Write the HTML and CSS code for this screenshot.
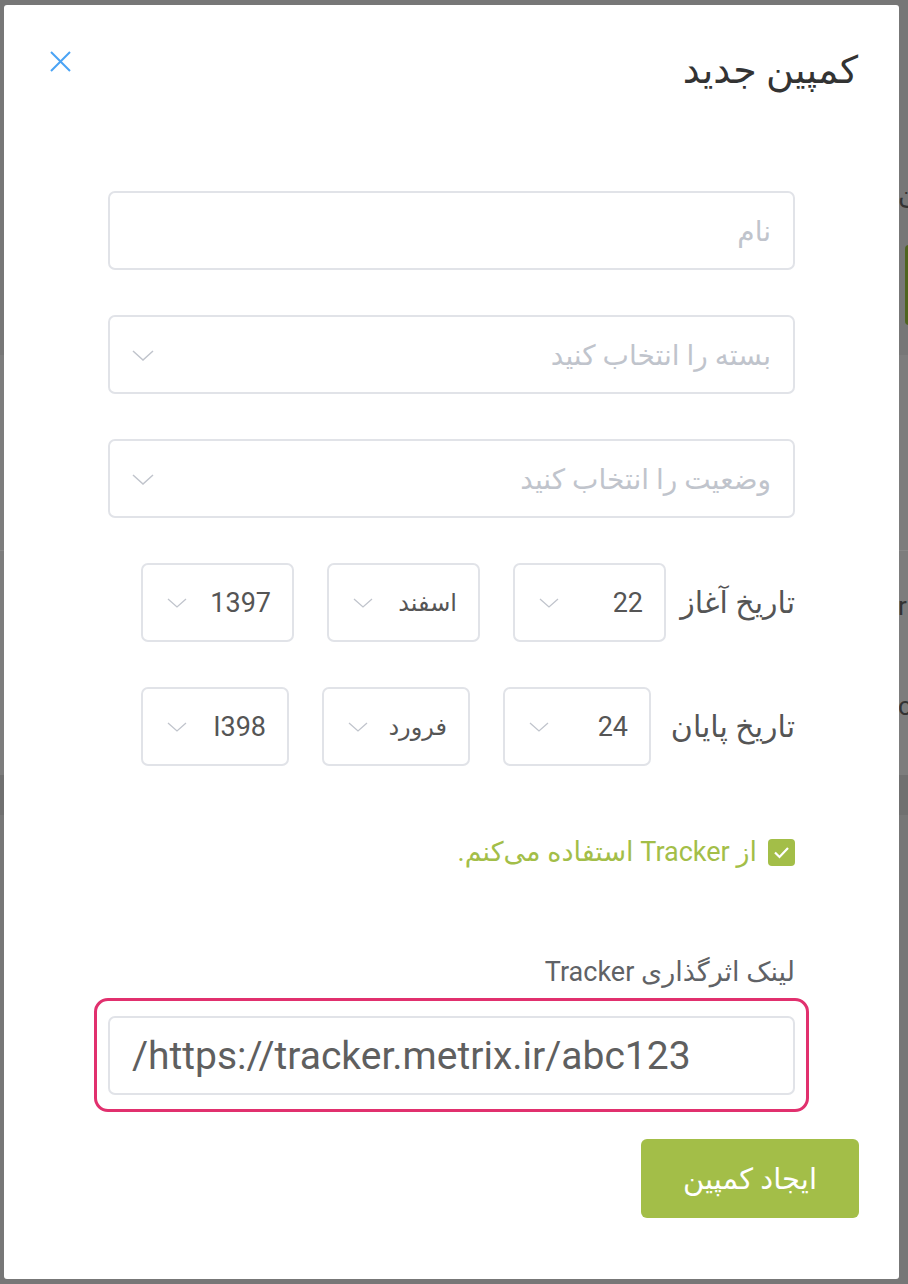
FILE: index.html
```html
<!DOCTYPE html>
<html lang="fa" dir="rtl">
<head>
<meta charset="utf-8">
<title>کمپین جدید</title>
<link rel="stylesheet" href="styles.css">
</head>
<body>
<div class="backdrop">
  <div class="bg-row bg-a"><span class="bg-text">ن</span><span class="bg-green"></span></div>
  <div class="bg-row bg-b"></div>
  <div class="bg-row bg-c"><span class="bg-text t2">r</span><span class="bg-text t3">c</span></div>
  <div class="bg-row bg-d"></div>
</div>
<div class="modal">
  <div class="header">
    <h1 class="title">کمپین جدید</h1>
    <button class="close" aria-label="close">
      <svg width="21" height="21" viewBox="0 0 21 21"><path d="M1 1L20 20M20 1L1 20" stroke="#4aa3f5" stroke-width="2" fill="none"/></svg>
    </button>
  </div>
  <div class="form">
    <div class="field"><span class="placeholder">نام</span></div>
    <div class="field select"><span class="placeholder">بسته را انتخاب کنید</span><svg class="chev" width="22" height="12" viewBox="0 0 22 12"><path d="M1 1L11 10L21 1" stroke="#c0c4cc" stroke-width="1.5" fill="none"/></svg></div>
    <div class="field select"><span class="placeholder">وضعیت را انتخاب کنید</span><svg class="chev" width="22" height="12" viewBox="0 0 22 12"><path d="M1 1L11 10L21 1" stroke="#c0c4cc" stroke-width="1.5" fill="none"/></svg></div>
    <div class="date-row">
      <span class="date-label">تاریخ آغاز</span>
      <div class="dbox w1"><span class="val num">22</span><svg class="chev sm" width="20" height="11" viewBox="0 0 20 11"><path d="M1 1L10 9L19 1" stroke="#c0c4cc" stroke-width="1.3" fill="none"/></svg></div>
      <div class="dbox w1"><span class="val">اسفند</span><svg class="chev sm" width="20" height="11" viewBox="0 0 20 11"><path d="M1 1L10 9L19 1" stroke="#c0c4cc" stroke-width="1.3" fill="none"/></svg></div>
      <div class="dbox w1"><span class="val num">1397</span><svg class="chev sm" width="20" height="11" viewBox="0 0 20 11"><path d="M1 1L10 9L19 1" stroke="#c0c4cc" stroke-width="1.3" fill="none"/></svg></div>
    </div>
    <div class="date-row">
      <span class="date-label">تاریخ پایان</span>
      <div class="dbox w2"><span class="val num">24</span><svg class="chev sm" width="20" height="11" viewBox="0 0 20 11"><path d="M1 1L10 9L19 1" stroke="#c0c4cc" stroke-width="1.3" fill="none"/></svg></div>
      <div class="dbox w2"><span class="val">فرورد</span><svg class="chev sm" width="20" height="11" viewBox="0 0 20 11"><path d="M1 1L10 9L19 1" stroke="#c0c4cc" stroke-width="1.3" fill="none"/></svg></div>
      <div class="dbox w2"><span class="val num">I398</span><svg class="chev sm" width="20" height="11" viewBox="0 0 20 11"><path d="M1 1L10 9L19 1" stroke="#c0c4cc" stroke-width="1.3" fill="none"/></svg></div>
    </div>
    <div class="check-row">
      <span class="checkbox"><svg width="17" height="13" viewBox="0 0 17 13"><path d="M2 6.5L6.5 11L15 2" stroke="#fff" stroke-width="2.2" fill="none"/></svg></span>
      <span class="check-text">از Tracker استفاده می‌کنم.</span>
    </div>
    <div class="link-label">لینک اثرگذاری Tracker</div>
    <div class="highlight">
      <div class="field link"><span class="link-text" dir="ltr">/https://tracker.metrix.ir/abc123</span></div>
    </div>
  </div>
  <div class="footer">
    <button class="submit">ایجاد کمپین</button>
  </div>
</div>
</body>
</html>
```

FILE: styles.css
```css
html, body {
  margin: 0;
  padding: 0;
}
body {
  width: 908px;
  height: 1284px;
  background: #777777;
  overflow: hidden;
  position: relative;
  font-family: Roboto, "DejaVu Sans", sans-serif;
}
.backdrop {
  position: absolute;
  top: 0;
  left: 0;
  width: 908px;
  height: 1284px;
}
.bg-row {
  position: absolute;
  left: 0;
  width: 908px;
}
.bg-a { top: 150px; height: 205px; background: #777; }
.bg-b { top: 355px; height: 195px; background: #7d7d7d; }
.bg-c { top: 550px; height: 225px; background: #7d7d7d; border-top: 1px solid #888; }
.bg-d { top: 775px; height: 40px; background: #707070; }
.bg-text {
  position: absolute;
  left: 898px;
  top: 30px;
  font-size: 26px;
  color: #333;
}
.t2 { top: 40px; }
.t3 { top: 140px; }
.bg-green {
  position: absolute;
  left: 905px;
  top: 95px;
  width: 10px;
  height: 80px;
  background: #4f6420;
  border-radius: 4px;
}
.modal {
  position: relative;
  margin: 5px 9px 0 0;
  width: 895px;
  height: 1274px;
  background: #fff;
  border-radius: 3px;
  box-sizing: border-box;
  display: flex;
  flex-direction: column;
}
.header {
  display: flex;
  justify-content: space-between;
  align-items: center;
  padding: 40px 41px 0 41px;
  height: 50px;
}
.title {
  margin: 0;
  font-size: 38px;
  font-weight: normal;
  color: #333;
  line-height: 50px;
}
.close {
  background: none;
  border: 0;
  padding: 0;
  margin-left: 5px;
  margin-top: -18px;
  width: 21px;
  height: 21px;
  display: flex;
}
.form {
  padding: 96px 104px 0 104px;
  display: flex;
  flex-direction: column;
}
.field {
  height: 79px;
  border: 2px solid #e1e3e8;
  border-radius: 7px;
  box-sizing: border-box;
  display: flex;
  align-items: center;
  justify-content: space-between;
  padding: 0 22px 0 22px;
  margin-bottom: 45px;
}
.placeholder {
  font-size: 28px;
  color: #c0c4cc;
  padding-top: 2px;
}
.chev { display: block; margin-top: 2px; }
.date-row {
  display: flex;
  align-items: center;
  gap: 33px;
  padding-left: 33px;
  margin-bottom: 45px;
}
.date-label {
  flex: 1 1 0;
  min-width: 0;
  font-size: 30px;
  color: #555;
  white-space: nowrap;
}
.dbox {
  flex: 0 0 auto;
  height: 79px;
  border: 2px solid #e1e3e8;
  border-radius: 7px;
  box-sizing: border-box;
  display: flex;
  align-items: center;
  justify-content: space-between;
  padding: 0 21px 0 24px;
}
.w1 { width: 153px; }
.w2 { width: 148px; }
.val {
  font-size: 24px;
  color: #555;
}
.val.num {
  font-size: 27px;
}
.check-row {
  display: flex;
  align-items: center;
  gap: 11px;
  margin-top: 25px;
}
.checkbox {
  width: 27px;
  height: 27px;
  border-radius: 4px;
  background: #a3be48;
  display: flex;
  align-items: center;
  justify-content: center;
}
.check-text {
  font-size: 27px;
  color: #a3be48;
}
.link-label {
  margin-top: 88px;
  font-size: 27px;
  color: #606266;
}
.highlight {
  margin: 10px -14px 0 -14px;
  border: 3px solid #e1306e;
  border-radius: 14px;
  padding: 15px 11px 14px 11px;
}
.field.link {
  margin-bottom: 0;
  direction: ltr;
  justify-content: flex-start;
}
.link-text {
  font-size: 39px;
  color: #5f5f5f;
}
.footer {
  display: flex;
  padding: 27px 40px 0 40px;
}
.submit {
  width: 218px;
  height: 79px;
  border: 0;
  border-radius: 6px;
  background: #a3be48;
  color: #fff;
  font-family: Roboto, "DejaVu Sans", sans-serif;
  font-size: 29px;
}
```
